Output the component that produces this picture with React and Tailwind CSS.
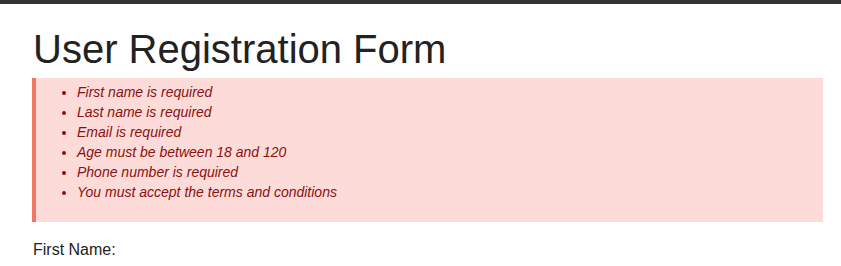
import React from 'react'

const errors = [
  'First name is required',
  'Last name is required',
  'Email is required',
  'Age must be between 18 and 120',
  'Phone number is required',
  'You must accept the terms and conditions',
]

const App = () => {
  return (
    <div className="min-h-screen bg-white font-['Liberation_Sans',Arial,sans-serif]">
      <div className="h-[4px] bg-[#333333]" />
      <div className="pl-[32px] w-[823px]">
        <h1 className="text-[40px] leading-[46px] text-[#222222] pl-[1px] mt-[22px] mb-[6px]">
          User Registration Form
        </h1>

        {/* Errors */}
        <div className="bg-[#fddbd8] border-l-4 border-[#f57565] pt-[4px] pb-[20px]">
          <ul className="list-disc pl-[41px] text-[14px] leading-[20px] italic text-[#8b1010]">
            {errors.map((e) => (
              <li key={e}>{e}</li>
            ))}
          </ul>
        </div>

        <label className="block mt-[18px] pl-[1px] text-[16px] leading-[20px] text-[#222222]">
          First Name:
        </label>
      </div>
    </div>
  )
}

export default App
